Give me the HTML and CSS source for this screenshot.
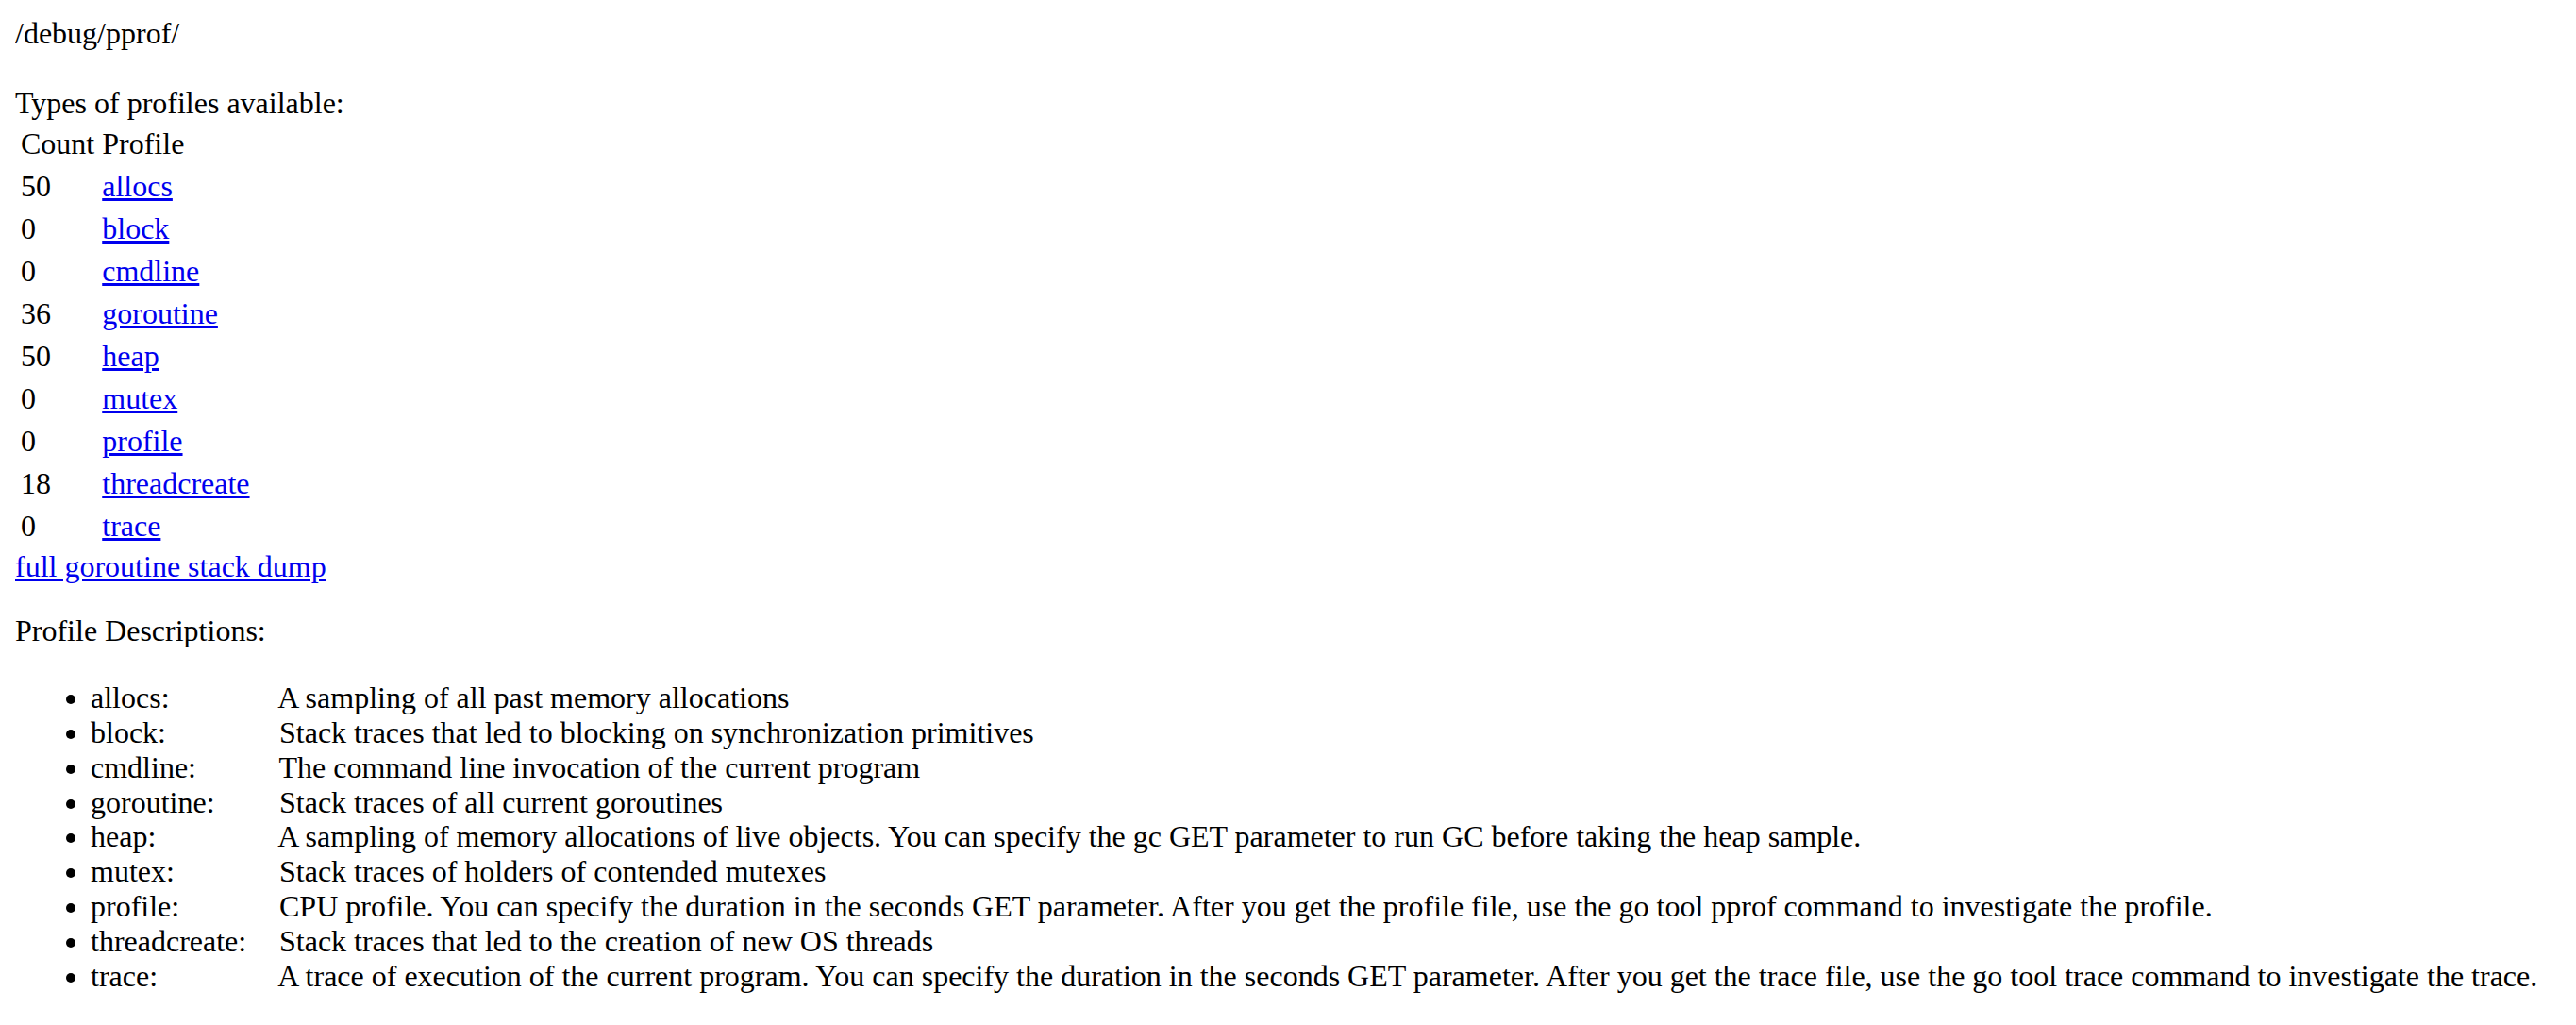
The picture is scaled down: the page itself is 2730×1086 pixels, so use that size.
FILE: index.html
```html
<!DOCTYPE html>
<html>
<head>
<meta charset="utf-8">
<title>/debug/pprof/</title>
<link rel="stylesheet" href="styles.css">
</head>
<body class="page">
<div class="path">/debug/pprof/</div>
<div class="types">Types of profiles available:</div>
<table class="profiles">
<thead><tr><td>Count</td><td>Profile</td></tr></thead>
<tbody>
<tr><td>50</td><td><a href="#">allocs</a></td></tr>
<tr><td>0</td><td><a href="#">block</a></td></tr>
<tr><td>0</td><td><a href="#">cmdline</a></td></tr>
<tr><td>36</td><td><a href="#">goroutine</a></td></tr>
<tr><td>50</td><td><a href="#">heap</a></td></tr>
<tr><td>0</td><td><a href="#">mutex</a></td></tr>
<tr><td>0</td><td><a href="#">profile</a></td></tr>
<tr><td>18</td><td><a href="#">threadcreate</a></td></tr>
<tr><td>0</td><td><a href="#">trace</a></td></tr>
</tbody>
</table>
<a href="#">full goroutine stack dump</a>
<p class="desc-title">Profile Descriptions:</p>
<ul class="descs">
<li><div class="profile-name">allocs: </div> A sampling of all past memory allocations</li>
<li><div class="profile-name">block: </div> Stack traces that led to blocking on synchronization primitives</li>
<li><div class="profile-name">cmdline: </div> The command line invocation of the current program</li>
<li><div class="profile-name">goroutine: </div> Stack traces of all current goroutines</li>
<li><div class="profile-name">heap: </div> A sampling of memory allocations of live objects. You can specify the gc GET parameter to run GC before taking the heap sample.</li>
<li><div class="profile-name">mutex: </div> Stack traces of holders of contended mutexes</li>
<li><div class="profile-name">profile: </div> CPU profile. You can specify the duration in the seconds GET parameter. After you get the profile file, use the go tool pprof command to investigate the profile.</li>
<li><div class="profile-name">threadcreate: </div> Stack traces that led to the creation of new OS threads</li>
<li><div class="profile-name">trace: </div> A trace of execution of the current program. You can specify the duration in the seconds GET parameter. After you get the trace file, use the go tool trace command to investigate the trace.</li>
</ul>
</body>
</html>
```

FILE: styles.css
```css
html {
  background: #ffffff;
}
.page {
  margin: 16px;
  font-family: "Liberation Serif", "Times New Roman", serif;
  font-size: 32px;
  line-height: 1.15;
  color: #000000;
}
.page a {
  color: #0000ee;
  text-decoration: underline;
}
.path {
  padding-top: 1px;
}
.types {
  margin-top: 37px;
}
.profiles {
  border-spacing: 4px;
  border-collapse: separate;
  font-size: 32px;
  line-height: 37px;
}
.profiles td {
  padding: 2px;
}
.desc-title {
  margin: 32px 0 0 0;
}
.descs {
  margin: 34px 0 32px 0;
  padding-left: 80px;
}
.profile-name {
  display: inline-block;
  width: 192px;
}
```
